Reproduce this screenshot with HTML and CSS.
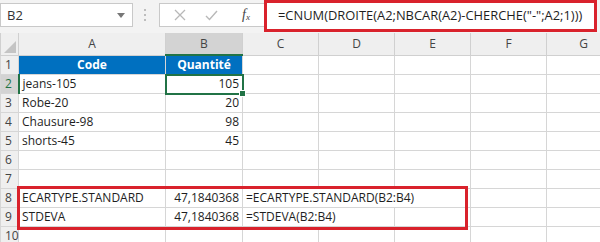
FILE: index.html
```html
<!DOCTYPE html>
<html lang="fr">
<head>
  <meta charset="UTF-8">
  <title>Classeur</title>
  <link rel="stylesheet" href="styles.css">
</head>
<body>
  <div class="toolbar">
    <div class="namebox">
      <span>B2</span>
      <svg class="caret" width="8" height="5" viewBox="0 0 8 5"><path d="M0 0h8L4 5z" fill="#777"/></svg>
    </div>
    <div class="grip"><i></i><i></i><i></i></div>
    <div class="fbar">
      <div class="fbtns">
        <svg width="12" height="12" viewBox="0 0 12 12"><path d="M1 1L11 11M11 1L1 11" stroke="#b8b8b8" stroke-width="1.3" fill="none"/></svg>
        <svg width="13" height="11" viewBox="0 0 13 11"><path d="M1 6L4.5 9.5L12 1" stroke="#b8b8b8" stroke-width="1.4" fill="none"/></svg>
        <span class="fx">f<sub>x</sub></span>
      </div>
      <div class="formula">=CNUM(DROITE(A2;NBCAR(A2)-CHERCHE("-";A2;1)))</div>
    </div>
  </div>

  <div class="sheet">
    <table class="grid">
      <colgroup>
        <col class="c-rh"><col class="c-a"><col class="c-b"><col class="c-n"><col class="c-n"><col class="c-n"><col class="c-n"><col class="c-g">
      </colgroup>
      <tr class="colhead">
        <th class="corner"><svg width="12" height="12" viewBox="0 0 12 12"><path d="M12 0V12H0z" fill="#c4c4c4"/></svg></th>
        <th>A</th><th class="sel">B</th><th>C</th><th>D</th><th>E</th><th>F</th><th>G</th>
      </tr>
      <tr><th class="rh">1</th><td class="hdr">Code</td><td class="hdr">Quantité</td><td></td><td></td><td></td><td></td><td></td></tr>
      <tr><th class="rh sel">2</th><td>jeans-105</td><td class="num active">105</td><td></td><td></td><td></td><td></td><td></td></tr>
      <tr><th class="rh">3</th><td>Robe-20</td><td class="num">20</td><td></td><td></td><td></td><td></td><td></td></tr>
      <tr><th class="rh">4</th><td>Chausure-98</td><td class="num">98</td><td></td><td></td><td></td><td></td><td></td></tr>
      <tr><th class="rh">5</th><td>shorts-45</td><td class="num">45</td><td></td><td></td><td></td><td></td><td></td></tr>
      <tr><th class="rh">6</th><td></td><td></td><td></td><td></td><td></td><td></td><td></td></tr>
      <tr><th class="rh">7</th><td></td><td></td><td></td><td></td><td></td><td></td><td></td></tr>
      <tr><th class="rh">8</th><td>ECARTYPE.STANDARD</td><td class="num">47,1840368</td><td colspan="3">=ECARTYPE.STANDARD(B2:B4)</td><td></td><td></td></tr>
      <tr><th class="rh">9</th><td>STDEVA</td><td class="num">47,1840368</td><td colspan="2">=STDEVA(B2:B4)</td><td></td><td></td><td></td></tr>
      <tr><th class="rh">10</th><td></td><td></td><td></td><td></td><td></td><td></td><td></td></tr>
    </table>
    <div class="mark"></div>
  </div>
</body>
</html>
```

FILE: styles.css
```css
body {
  margin: 0;
  width: 600px;
  height: 242px;
  overflow: hidden;
  background: #fff;
  font-family: "Open Sans", "Liberation Sans", sans-serif;
  color: #1e1e1e;
}
.toolbar {
  display: flex;
  align-items: flex-start;
  height: 33px;
  background: #f3f3f3;
}
.namebox {
  display: flex;
  align-items: center;
  justify-content: space-between;
  box-sizing: border-box;
  width: 133px;
  height: 24px;
  margin: 3px 0 0 0;
  padding: 0 7px 0 6px;
  background: #fff;
  border: 1px solid #c9c9c9;
  font-size: 13px;
  color: #333;
}
.grip {
  display: flex;
  flex-direction: column;
  gap: 3px;
  margin: 9px 13px 0 11px;
}
.grip i {
  width: 2px;
  height: 2px;
  background: #bdbdbd;
}
.fbar {
  display: flex;
  flex: 1;
  align-items: flex-start;
}
.fbtns {
  display: flex;
  align-items: center;
  gap: 19px;
  box-sizing: border-box;
  width: 105px;
  height: 24px;
  margin-top: 3px;
  padding-left: 14px;
  background: #fff;
  border: 1px solid #c9c9c9;
  border-right: none;
}
.fx {
  font-family: "Liberation Serif", serif;
  font-style: italic;
  font-size: 14px;
  color: #444;
  margin-left: 5px;
}
.fx sub {
  font-size: 9px;
  vertical-align: -1px;
}
.formula {
  box-sizing: border-box;
  flex: 1;
  height: 32px;
  margin-right: 3px;
  padding: 0 0 0 11px;
  background: #fff;
  border: 3.5px solid #d9222c;
  font-size: 12.9px;
  line-height: 24px;
  color: #1e1e1e;
  white-space: nowrap;
}
.sheet {
  position: relative;
}
.grid {
  border-collapse: collapse;
  table-layout: fixed;
  width: 620px;
  font-size: 12px;
}
.c-rh { width: 18px; }
.c-a { width: 147px; }
.c-b { width: 77px; }
.c-n { width: 76px; }
.c-g { width: 74px; }
.grid th,
.grid td {
  padding: 0 3px;
  height: 18px;
  line-height: 16px;
  border: 1px solid #d6d6d6;
  white-space: nowrap;
  overflow: visible;
  font-weight: normal;
}
.colhead th {
  height: 21px;
  background: #efefef;
  border-color: #d0d0d0;
  border-top: none;
  color: #444;
  font-size: 12px;
}
.colhead th.sel {
  background: #d3d3d3;
  border-bottom: 2px solid #217346;
}
.corner {
  text-align: right;
  vertical-align: bottom;
}
.corner svg {
  display: block;
  margin: 0 0 2px auto;
}
.rh {
  background: #efefef;
  border-color: #d0d0d0;
  border-left: none;
  color: #444;
  font-size: 12px;
  text-align: left;
  padding: 0 0 0 4px !important;
}
.rh.sel {
  background: #d3d3d3;
  color: #217346;
  border-right: 2px solid #217346;
}
.hdr {
  background: #0070c0;
  color: #fff;
  font-weight: bold !important;
  text-align: center;
  border-color: #3d8fd0;
}
.num {
  text-align: right;
}
.active {
  position: relative;
  outline: 2px solid #217346;
  outline-offset: -1px;
}
.active::after {
  content: "";
  position: absolute;
  right: -4px;
  bottom: -4px;
  width: 5px;
  height: 5px;
  background: #217346;
  border: 1px solid #fff;
}
.mark {
  position: absolute;
  left: 17px;
  top: 153px;
  width: 451px;
  height: 44px;
  box-sizing: border-box;
  border: 3.5px solid #d9222c;
  pointer-events: none;
}
```
